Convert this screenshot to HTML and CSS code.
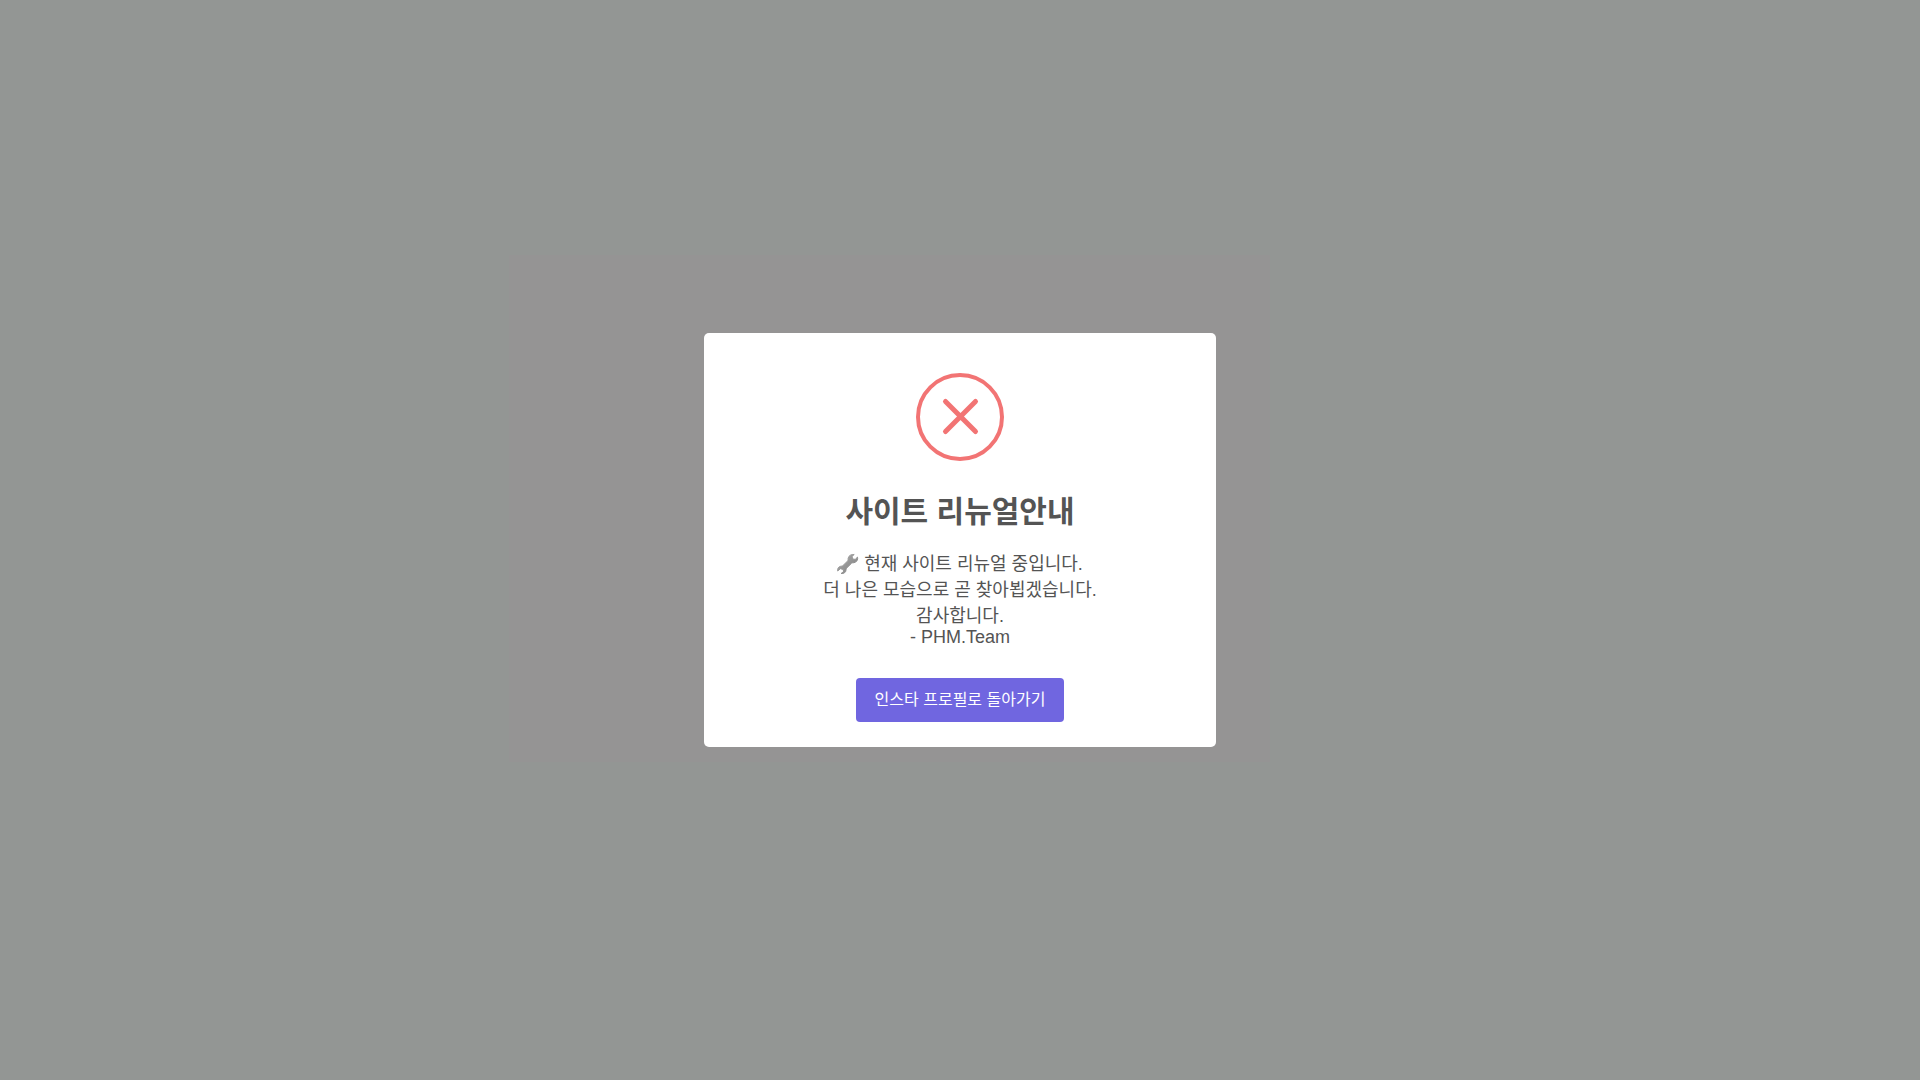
FILE: index.html
```
<!DOCTYPE html>
<html lang="ko">
<head>
    <meta charset="UTF-8">
    <meta name="viewport" content="width=device-width, initial-scale=1.0">
    <title>사이트 리뉴얼안내</title>
    <link rel="stylesheet" href="styles.css">
</head>
<body>
    <main class="page">
        <div class="panel"></div>
    </main>

    <!-- Notice popup -->
    <div class="overlay">
        <div class="popup" role="dialog" aria-modal="true" aria-labelledby="popupTitle">
            <svg class="popup-icon" viewBox="0 0 88 88" aria-hidden="true">
                <circle cx="44" cy="44" r="42"/>
                <path class="mark" d="M29.5 28.5L59.5 58.5M59.5 28.5L29.5 58.5"/>
            </svg>
            <h2 id="popupTitle" class="popup-title">사이트 리뉴얼안내</h2>
            <p class="popup-text">
                <svg class="wrench" viewBox="0 0 22 20" aria-hidden="true">
                    <defs>
                        <linearGradient id="steel" x1="0" y1="0" x2="1" y2="1">
                            <stop offset="0" stop-color="#b0b0b0"/>
                            <stop offset="1" stop-color="#7c7c7c"/>
                        </linearGradient>
                    </defs>
                    <path fill="url(#steel)" stroke="url(#steel)" stroke-width="1" stroke-linejoin="round" d="M17.2 0.5C14.6 0 11.4 1.6 11.1 4.4C11 5.4 11.2 6.1 10.9 6.7L5.8 11.7C5.2 12.2 4.6 12 3.8 12.2C1.4 12.6 0.2 14.8 0.7 17L3.4 14.7L6.4 15.5L6.4 18L4 19.5C6.8 19.9 8.9 18.4 9 16C9.1 15.2 9 14.8 9.5 14.2L14.7 9.1C15.3 8.6 16.1 8.9 17 8.7C19.9 8.2 21.2 5.3 20.5 3.1L18.2 5.4L15.6 4.9L15.1 2.4Z"/>
                </svg>
                현재 사이트 리뉴얼 중입니다.<br>
                더 나은 모습으로 곧 찾아뵙겠습니다.<br>
                감사합니다.<br>
                - PHM.Team
            </p>
            <button type="button" class="popup-button">인스타 프로필로 돌아가기</button>
        </div>
    </div>
</body>
</html>
```
FILE: styles.css
```
* {
    box-sizing: border-box;
}

body {
    margin: 0;
    font-family: "Liberation Sans", "Noto Sans CJK KR", sans-serif;
    background-color: #f6faf7;
}

.page {
    display: flex;
    justify-content: center;
    align-items: center;
    min-height: 100vh;
    padding: 0 141px 63px 0;
}

.panel {
    width: 100%;
    max-width: 761px;
    min-height: 507px;
    background-color: #f8f7f7;
}

/* Popup */
.overlay {
    position: fixed;
    inset: 0;
    display: flex;
    justify-content: center;
    align-items: center;
    padding: 10px;
    background-color: rgba(0, 0, 0, 0.4);
}

.popup {
    display: flex;
    flex-direction: column;
    align-items: center;
    width: 512px;
    max-width: 100%;
    padding: 40px 0 25px;
    border-radius: 5px;
    background-color: #fff;
    color: #545454;
    text-align: center;
}

.popup-icon {
    width: 88px;
    height: 88px;
    fill: none;
    stroke: #f27474;
    stroke-width: 4;
}

.popup-icon .mark {
    stroke-width: 5;
    stroke-linecap: round;
}

.popup-title {
    margin: 26px 0 0;
    padding: 0 16px;
    font-size: 30px;
    font-weight: 600;
}

.popup-text {
    margin: 18px 0 0;
    padding: 0 26px;
    font-size: 18px;
}

.wrench {
    width: 22px;
    height: 20px;
    vertical-align: -4px;
    overflow: visible;
}

.popup-button {
    margin-top: 30px;
    padding: 8px 19px 12px;
    border: 0;
    border-radius: 4px;
    background-color: #7066e0;
    color: #fff;
    font-family: inherit;
    font-size: 16px;
    cursor: pointer;
}

.popup-button:hover {
    background-color: #655cca;
}
```
